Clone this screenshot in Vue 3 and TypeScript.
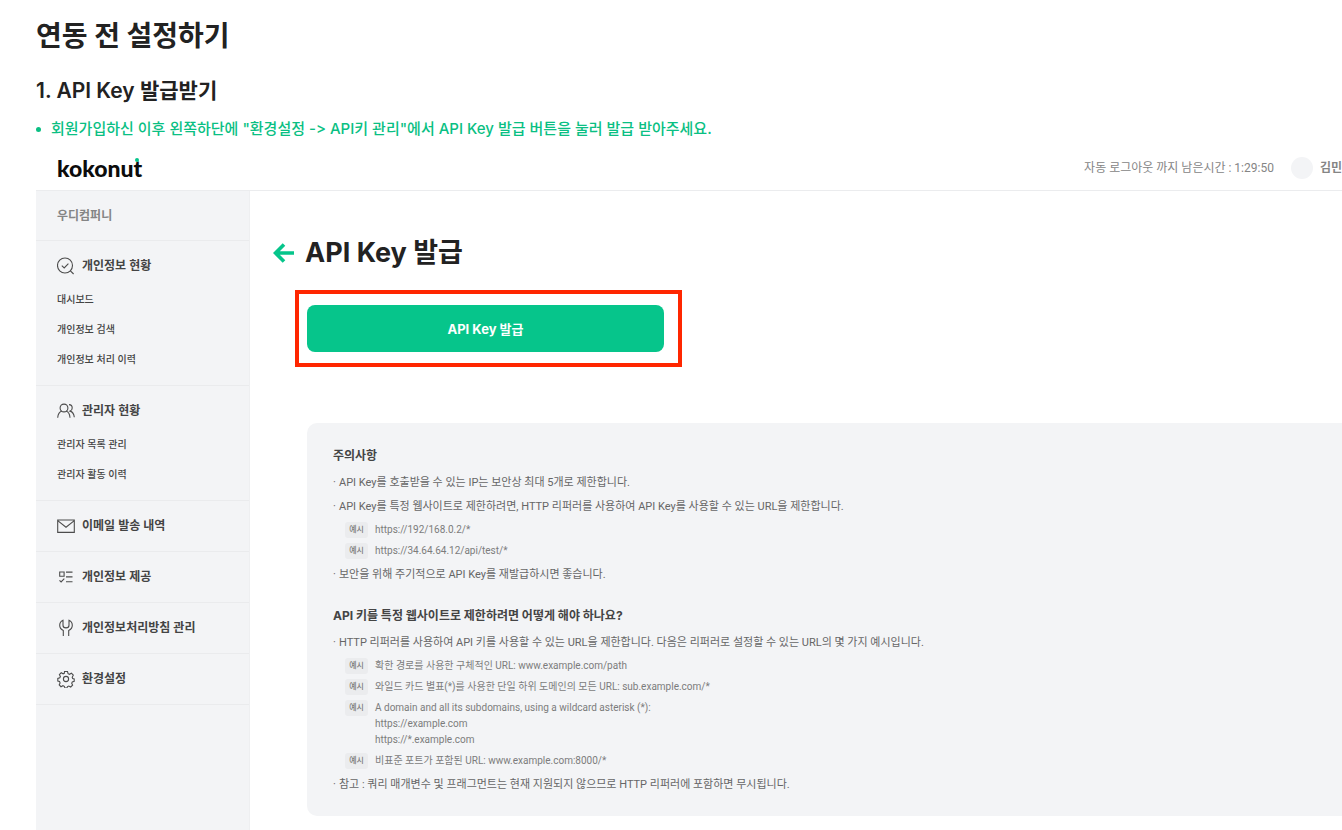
<script setup lang="ts">
interface MenuGroup {
  icon: string
  label: string
  items: string[]
}
interface Example {
  lines: string[]
}
interface Note {
  text: string
  examples?: Example[]
}
interface NoteSection {
  title: string
  notes: Note[]
}

const menu: MenuGroup[] = [
  { icon: 'check', label: '개인정보 현황', items: ['대시보드', '개인정보 검색', '개인정보 처리 이력'] },
  { icon: 'users', label: '관리자 현황', items: ['관리자 목록 관리', '관리자 활동 이력'] },
  { icon: 'mail', label: '이메일 발송 내역', items: [] },
  { icon: 'list', label: '개인정보 제공', items: [] },
  { icon: 'wrench', label: '개인정보처리방침 관리', items: [] },
  { icon: 'gear', label: '환경설정', items: [] },
]

const sections: NoteSection[] = [
  {
    title: '주의사항',
    notes: [
      { text: 'API Key를 호출받을 수 있는 IP는 보안상 최대 5개로 제한합니다.' },
      {
        text: 'API Key를 특정 웹사이트로 제한하려면, HTTP 리퍼러를 사용하여 API Key를 사용할 수 있는 URL을 제한합니다.',
        examples: [{ lines: ['https://192/168.0.2/*'] }, { lines: ['https://34.64.64.12/api/test/*'] }],
      },
      { text: '보안을 위해 주기적으로 API Key를 재발급하시면 좋습니다.' },
    ],
  },
  {
    title: 'API 키를 특정 웹사이트로 제한하려면 어떻게 해야 하나요?',
    notes: [
      {
        text: 'HTTP 리퍼러를 사용하여 API 키를 사용할 수 있는 URL을 제한합니다. 다음은 리퍼러로 설정할 수 있는 URL의 몇 가지 예시입니다.',
        examples: [
          { lines: ['확한 경로를 사용한 구체적인 URL: www.example.com/path'] },
          { lines: ['와일드 카드 별표(*)를 사용한 단일 하위 도메인의 모든 URL: sub.example.com/*'] },
          {
            lines: [
              'A domain and all its subdomains, using a wildcard asterisk (*):',
              'https://example.com',
              'https://*.example.com',
            ],
          },
          { lines: ['비표준 포트가 포함된 URL: www.example.com:8000/*'] },
        ],
      },
      { text: '참고 : 쿼리 매개변수 및 프래그먼트는 현재 지원되지 않으므로 HTTP 리퍼러에 포함하면 무시됩니다.' },
    ],
  },
]
</script>

<template>
  <div class="page">
    <header class="guide">
      <h1>연동 전 설정하기</h1>
      <h2>1. API Key 발급받기</h2>
      <ul class="steps">
        <li>회원가입하신 이후 왼쪽하단에 "환경설정 -&gt; API키 관리"에서 API Key 발급 버튼을 눌러 발급 받아주세요.</li>
      </ul>
    </header>

    <div class="app">
      <div class="topbar">
        <a class="logo" href="#">kokonut<span class="logo-dot"></span></a>
        <div class="account">
          <span class="timer">자동 로그아웃 까지 남은시간 : 1:29:50</span>
          <span class="avatar"></span>
          <span class="name">김민</span>
        </div>
      </div>

      <div class="body">
        <nav class="sidebar">
          <div class="company">우디컴퍼니</div>
          <section v-for="group in menu" :key="group.label" class="group">
            <a class="group-title" href="#">
              <svg class="icon" viewBox="0 0 18 18" aria-hidden="true">
                <g v-if="group.icon === 'check'">
                  <circle cx="8" cy="8.5" r="7.5" />
                  <path d="M4.8 8.7l2.4 2.3 4.2-4.4M13.4 13.8l3.2 3.2" />
                </g>
                <g v-else-if="group.icon === 'users'">
                  <circle cx="7" cy="6" r="3.9" />
                  <path d="M.7 15.8c.2-3.500 2.200-6 4.300-6.700M9 9.100c2.400.8 3.800 3.200 4 6.700M12 2.600c2 .1 3.200 1.500 3.200 3.300 0 1.600-.9 2.700-2.100 3.200 2.500.7 3.900 3 4.200 6.200" />
                </g>
                <g v-else-if="group.icon === 'mail'">
                  <path d="M.7 3h16.600v12.400H.7zM.7 3.600l8.300 6.600 8.300-6.600" />
                </g>
                <g v-else-if="group.icon === 'list'">
                  <path d="M2.700 4h4.400v4.200H2.700zM9 4.100h6.500M9 8.900h6.500M9 13.700h6.500M2.500 12.300l1.600 1.600 3.200-3.200" />
                </g>
                <g v-else-if="group.icon === 'wrench'">
                  <path d="M6.300 17v-5.500C4 10.500 2.700 8.700 2.700 6.300c0-2.200 1.100-4 3.300-5v4.900c0 1.700 1.200 2.700 3 2.700s3-1 3-2.700V1.300c2.200 1 3.300 2.800 3.300 5 0 2.400-1.300 4.200-3.600 5.200V17" />
                </g>
                <g v-else>
                  <circle cx="9" cy="9" r="2.600" />
                  <path d="M7.500 1.500h3l.6 2.200 1.300.6 2-1.100 1.900 2-1.100 2 .5 1.300 1.500.4v2.400l-1.900.6-.6 1.400.9 1.800-1.900 1.900-1.900-1-1.300.6-.6 1.500H8l-.7-1.800-1.400-.6-1.900 1-1.800-1.900.9-1.900-.6-1.400-1.700-.5V8.500l2-.7.6-1.300-1-1.900 1.800-1.800 1.900 1 1.200-.5z" />
                </g>
              </svg>
              <span>{{ group.label }}</span>
            </a>
            <ul v-if="group.items.length" class="sub">
              <li v-for="item in group.items" :key="item"><a href="#">{{ item }}</a></li>
            </ul>
          </section>
        </nav>

        <main class="content">
          <div class="heading">
            <a class="back" href="#" aria-label="뒤로">
              <svg viewBox="0 0 22 22" aria-hidden="true">
                <path d="M11 2.500L2.500 11l8.500 8.500M2.500 11h18.500" />
              </svg>
            </a>
            <h3>API Key 발급</h3>
          </div>

          <div class="highlight">
            <button class="issue" type="button">API Key 발급</button>
          </div>

          <div class="notice">
            <section v-for="section in sections" :key="section.title" class="notice-section">
              <h4>{{ section.title }}</h4>
              <ul>
                <li v-for="note in section.notes" :key="note.text">
                  <p class="note">{{ note.text }}</p>
                  <ul v-if="note.examples" class="examples">
                    <li v-for="example in note.examples" :key="example.lines[0]">
                      <span class="chip">예시</span>
                      <div>
                        <p v-for="line in example.lines" :key="line">{{ line }}</p>
                      </div>
                    </li>
                  </ul>
                </li>
              </ul>
            </section>
          </div>
        </main>
      </div>
    </div>
  </div>
</template>

<style>
body {
  margin: 0;
  background: #fff;
}
</style>

<style scoped>
.page {
  box-sizing: border-box;
  min-height: 100vh;
  display: flex;
  flex-direction: column;
  padding-left: 36px;
  overflow: hidden;
  color: #222;
  font-family: Inter, "Noto Sans CJK KR", sans-serif;
}
h1, h2, h3, h4, p, ul {
  margin: 0;
  padding: 0;
}
ul {
  list-style: none;
}
a {
  color: inherit;
  text-decoration: none;
}
.guide {
  padding-top: 16px;
}
h1 {
  font-size: 28px;
  line-height: 40px;
  font-weight: 700;
}
h2 {
  margin-top: 20px;
  font-size: 21px;
  line-height: 30px;
  font-weight: 600;
}
.steps li {
  display: flex;
  align-items: center;
  gap: 10px;
  margin-top: 11px;
  color: #0abf83;
  font-size: 15px;
  line-height: 24px;
  font-weight: 500;
  white-space: nowrap;
}
.steps li::before {
  content: "";
  width: 5px;
  height: 5px;
  border-radius: 50%;
  background: #0abf83;
}
.app {
  flex: 1;
  display: flex;
  flex-direction: column;
  margin-top: 5px;
}
.topbar {
  display: flex;
  align-items: center;
  justify-content: space-between;
  height: 44px;
  padding-left: 21px;
  border-bottom: 1px solid #ebecee;
}
.logo {
  position: relative;
  color: #0c0c0c;
  font-family: Lato, sans-serif;
  font-size: 23px;
  line-height: 28px;
  font-weight: 900;
}
.logo-dot {
  position: absolute;
  top: 4px;
  right: 3px;
  width: 4px;
  height: 4px;
  border-radius: 50%;
  background: #06c58b;
}
.account {
  display: flex;
  align-items: center;
  color: #858585;
  font-size: 12px;
  line-height: 20px;
}
.timer {
  font-family: Roboto, "Noto Sans CJK KR", sans-serif;
}
.avatar {
  width: 22px;
  height: 22px;
  margin: 0 7px 0 17px;
  border-radius: 50%;
  background: #f3f4f6;
}
.name {
  font-weight: 600;
}
.body {
  flex: 1;
  display: flex;
}
.sidebar {
  flex: 0 0 213px;
  border-right: 1px solid #eeeff1;
  background: #f3f4f6;
  color: #444;
}
.company {
  padding: 1px 21px 0;
  border-bottom: 1px solid #eaebed;
  color: #858585;
  font-size: 12px;
  line-height: 48px;
  font-weight: 600;
}
.group {
  border-bottom: 1px solid #eaebed;
}
.group-title {
  display: flex;
  align-items: center;
  gap: 7px;
  padding: 13px 21px;
  font-size: 12px;
  line-height: 24px;
  font-weight: 600;
}
.icon {
  width: 18px;
  height: 18px;
  fill: none;
  stroke: #4c4c4c;
  stroke-width: 1.1;
}
.sub {
  margin-top: -7px;
  padding: 0 21px 11px;
  font-size: 10px;
  line-height: 30px;
  font-weight: 500;
}
.content {
  flex: 1;
  min-width: 0;
  padding: 42px 0 14px 23px;
}
.heading {
  display: flex;
  align-items: center;
  gap: 10px;
}
.back,
.back svg {
  display: block;
  width: 22px;
  height: 22px;
}
.back svg {
  fill: none;
  stroke: #06c58b;
  stroke-width: 3.6;
}
h3 {
  font-size: 27px;
  line-height: 40px;
  font-weight: 700;
}
.highlight {
  box-sizing: border-box;
  width: 387px;
  margin: 17px 0 0 22px;
  padding: 11px 14px 11px 8px;
  border: 4px solid #ff2600;
}
.issue {
  display: block;
  width: 100%;
  height: 47px;
  border: 0;
  border-radius: 8px;
  background: #06c58b;
  color: #fff;
  font: inherit;
  font-size: 13px;
  font-weight: 700;
}
.notice {
  margin: 56px 0 0 34px;
  padding: 23px 26px 19px;
  border-radius: 10px 0 0 10px;
  background: #f3f4f6;
  color: #666;
  font-family: Roboto, "Noto Sans CJK KR", sans-serif;
  white-space: nowrap;
}
.notice-section + .notice-section {
  margin-top: 19px;
}
h4 {
  margin-bottom: 5px;
  color: #444;
  font-family: Inter, "Noto Sans CJK KR", sans-serif;
  font-size: 12px;
  line-height: 20px;
  font-weight: 700;
}
.note {
  display: flex;
  font-size: 11px;
  line-height: 24px;
}
.note::before {
  content: "·";
  width: 6px;
}
.examples {
  display: grid;
  gap: 5px;
  padding: 3px 0 4px 12px;
}
.examples li {
  display: flex;
  align-items: flex-start;
  gap: 7px;
  color: #7c7c7c;
  font-size: 10px;
  line-height: 16px;
}
.chip {
  width: 23px;
  border-radius: 3px;
  background: #ebecee;
  font-size: 8px;
  font-weight: 500;
  text-align: center;
}
</style>
